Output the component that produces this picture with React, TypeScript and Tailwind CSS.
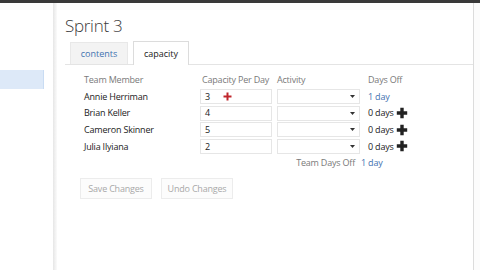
import React from "react";

const font = { fontFamily: '"Open Sans", "Noto Sans", sans-serif' };

function BlackPlus() {
  return (
    <svg width="12" height="12" viewBox="0 0 12 12" className="ml-[2px]">
      <path d="M4.3 0.8h3.4v3.5h3.5v3.4H7.7v3.5H4.3V7.7H0.8V4.3h3.5z" fill="#222" />
    </svg>
  );
}

function RedPlus() {
  return (
    <svg width="9" height="9" viewBox="0 0 9 9">
      <path d="M3.5 0.5h2v3h3v2h-3v3h-2v-3h-3v-2h3z" fill="#c0262c" />
    </svg>
  );
}

const rows = [
  { name: "Annie Herriman", cap: "3", off: "1 day", link: true, red: true },
  { name: "Brian Keller", cap: "4", off: "0 days", link: false },
  { name: "Cameron Skinner", cap: "5", off: "0 days", link: false },
  { name: "Julia Ilyiana", cap: "2", off: "0 days", link: false },
];

export default function App() {
  return (
    <div className="w-[480px] h-[270px] overflow-hidden bg-white flex flex-col" style={font}>
      <div className="h-[3px] bg-[#3a3a3a] shrink-0" />
      <div className="flex flex-1 min-h-0">
        <div className="w-[53px] shrink-0 pt-[67px]">
          <div className="h-[19px] w-[44px] bg-[#dde9f8] border-r border-[#c9dcf3]" />
        </div>
        <div className="w-[4px] shrink-0 bg-gradient-to-r from-[#e6e6e6] to-[#fbfbfb]" />
        <div className="w-[416px] shrink-0 flex flex-col pl-[8px]">
          <div className="text-[17px] font-light text-[#3a3a3a] leading-none pt-[14px] h-[37px] tracking-[-0.3px]">Sprint 3</div>
          <div className="flex items-end h-[25px] border-b border-[#e4e4e4] pl-[5px]">
            <div className="w-[58px] h-[22px] bg-[#f3f3f3] border border-[#e8e8e8] border-b-0 flex items-center justify-center text-[9px] text-[#3f72b0]">
              contents
            </div>
            <div className="ml-[5px] w-[56px] h-[24px] bg-white border border-[#dcdcdc] border-b-0 -mb-px flex items-center justify-center text-[9px] text-[#222]">
              capacity
            </div>
          </div>
          <div className="pl-[19px] pt-[7px] text-[9px] tracking-[-0.2px]">
            <div className="flex h-[16px] items-center text-[#7a7a7a]">
              <div className="w-[116px]">Team Member</div>
              <div className="w-[77px] pl-[2px]">Capacity Per Day</div>
              <div className="w-[91px]">Activity</div>
              <div>Days Off</div>
            </div>
            {rows.map((r) => (
              <div key={r.name} className="flex h-[16.7px] items-center text-[#222]">
                <div className="w-[116px]">{r.name}</div>
                <div className="w-[77px]">
                  <div className="w-[72px] h-[15px] border border-[#e6e6e6] flex items-center pl-[4px]">
                    <span className="w-[18px]">{r.cap}</span>
                    {r.red && <RedPlus />}
                  </div>
                </div>
                <div className="w-[91px]">
                  <div className="w-[83px] h-[15px] border border-[#e6e6e6] flex items-center justify-end pr-[4px]">
                    <svg width="5" height="3" viewBox="0 0 5 3">
                      <path d="M0 0h5L2.5 3z" fill="#333" />
                    </svg>
                  </div>
                </div>
                <div className="flex items-center">
                  <span className={r.link ? "text-[#3f72b0]" : "text-[#222]"}>{r.off}</span>
                  {!r.link && <BlackPlus />}
                </div>
              </div>
            ))}
            <div className="flex h-[16px] items-center">
              <div className="w-[277px] text-right pr-[6px] text-[#7a7a7a]">Team Days Off</div>
              <div className="text-[#3f72b0]">1 day</div>
            </div>
            <div className="flex gap-[9px] mt-[7px] -ml-[4px]">
              <div className="w-[72px] h-[21px] border border-[#ececec] bg-[#fcfcfc] flex items-center justify-center text-[#a8a8a8]">
                Save Changes
              </div>
              <div className="w-[72px] h-[21px] border border-[#ececec] bg-[#fcfcfc] flex items-center justify-center text-[#a8a8a8]">
                Undo Changes
              </div>
            </div>
          </div>
        </div>
        <div className="flex-1 border-l border-[#dcdcdc] bg-[#fcfcfc]" />
      </div>
    </div>
  );
}
